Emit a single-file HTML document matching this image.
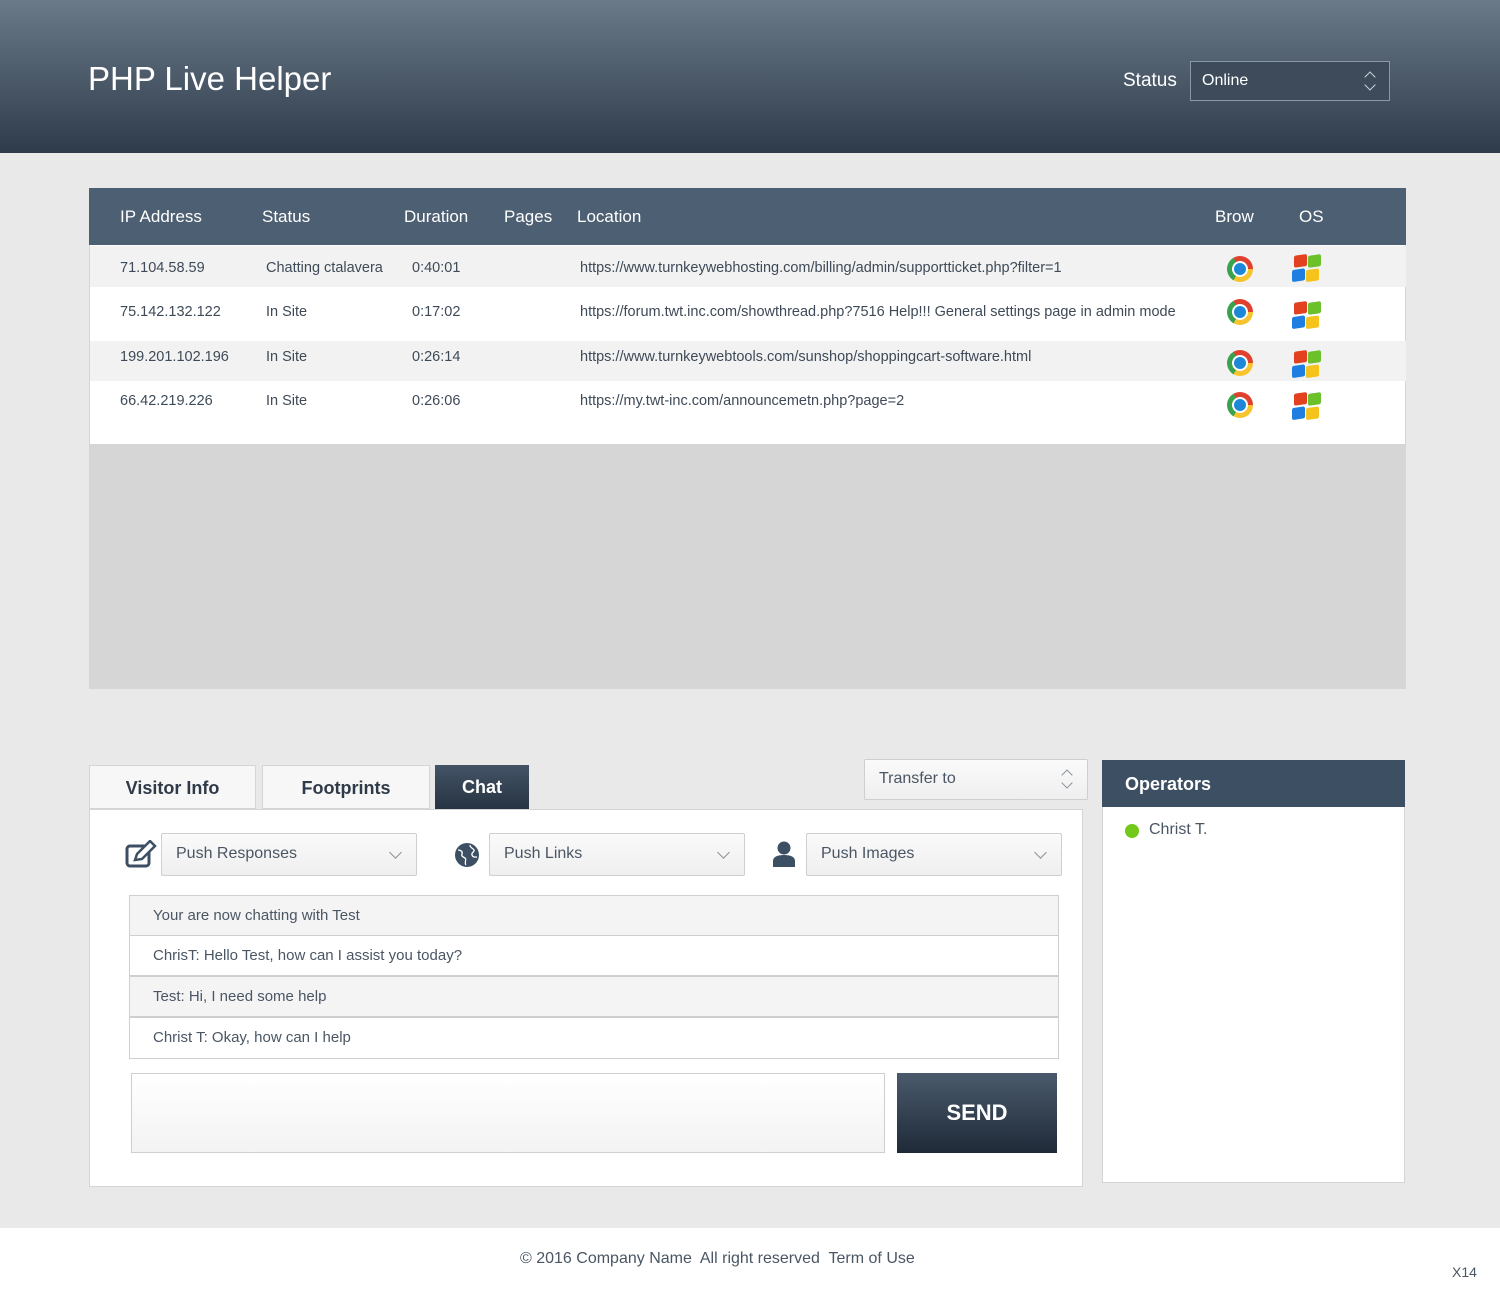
<!DOCTYPE html>
<html><head><meta charset="utf-8"><style>
*{box-sizing:border-box;margin:0;padding:0}
body{width:1500px;height:1293px;position:relative;background:#e9e9e9;font-family:"Liberation Sans",sans-serif;color:#3e4a57;overflow:hidden}
.a{position:absolute}
.hdr{left:0;top:0;width:1500px;height:153px;background:linear-gradient(#6a7a89,#2e3b4b)}
.th{color:#fff;font-size:17px;top:207px}
.td{font-size:14.5px;color:#3e4a57}
.row{left:90px;width:1316px}
.sel{background:linear-gradient(#fafafa,#efefef);border:1px solid #cfcfcf;border-radius:2px;font-size:16px;color:#4a5664;padding:11px 14px}
.chev{position:absolute;right:16px;top:14px;width:9px;height:9px;border-right:1.5px solid #8a929a;border-bottom:1.5px solid #8a929a;transform:rotate(45deg)}
.ud{position:absolute;width:8px;height:8px;border-right:1.5px solid currentColor;border-bottom:1.5px solid currentColor}
.msg{left:129px;width:930px;height:41px;border:1px solid #cfcfcf;font-size:15px;padding:11px 23px;color:#4a5664}
.chrome{width:26px;height:26px;border-radius:50%;background:conic-gradient(from -30deg,#e0412f 0 120deg,#f7c42e 120deg 240deg,#3aa14d 240deg 360deg)}
.chrome:after{content:"";position:absolute;left:7px;top:7px;width:12px;height:12px;border-radius:50%;background:#1e88d8;box-shadow:0 0 0 2px #fff}
.win{width:30px;height:28px;transform:skewY(-8deg)}
.win i{position:absolute;width:13px;height:12px;border-radius:2px}
.tab{font-size:18px;text-align:center;padding-top:12px;color:#2f3b48;font-weight:bold;top:765px;height:44px}
</style></head><body>
<div class="a hdr"></div>
<div class="a" style="left:88px;top:60px;font-size:33px;color:#fff">PHP Live Helper</div>
<div class="a" style="left:1123px;top:70px;font-size:19px;color:#fff">Status</div>
<div class="a" style="left:1190px;top:61px;width:200px;height:40px;border:1px solid #8a98a6;background:#3d4b5b;color:#fff;font-size:16px;padding:10px 11px">Online<i class="ud" style="right:15px;top:11px;color:#cfd6dc;transform:rotate(-135deg)"></i><i class="ud" style="right:15px;top:19px;color:#cfd6dc;transform:rotate(45deg)"></i></div>

<div class="a" style="left:89px;top:188px;width:1317px;height:257px;background:#fff;border:1px solid #d5d5d5"></div>
<div class="a" style="left:89px;top:188px;width:1317px;height:57px;background:#4d5f72"></div>
<div class="a th" style="left:120px">IP Address</div>
<div class="a th" style="left:262px">Status</div>
<div class="a th" style="left:404px">Duration</div>
<div class="a th" style="left:504px">Pages</div>
<div class="a th" style="left:577px">Location</div>
<div class="a th" style="left:1215px">Brow</div>
<div class="a th" style="left:1299px">OS</div>
<div class="a row" style="top:246px;height:41px;background:#f2f2f2"></div>
<div class="a row" style="top:341px;height:40px;background:#f2f2f2"></div>

<div class="a td" style="left:120px;top:260px">71.104.58.59</div><div class="a td" style="left:266px;top:260px">Chatting ctalavera</div><div class="a td" style="left:412px;top:260px">0:40:01</div><div class="a td" style="left:580px;top:260px">https://www.turnkeywebhosting.com/billing/admin/supportticket.php?filter=1</div>
<div class="a td" style="left:120px;top:304px">75.142.132.122</div><div class="a td" style="left:266px;top:304px">In Site</div><div class="a td" style="left:412px;top:304px">0:17:02</div><div class="a td" style="left:580px;top:304px">https://forum.twt.inc.com/showthread.php?7516 Help!!! General settings page in admin mode</div>
<div class="a td" style="left:120px;top:349px">199.201.102.196</div><div class="a td" style="left:266px;top:349px">In Site</div><div class="a td" style="left:412px;top:349px">0:26:14</div><div class="a td" style="left:580px;top:349px">https://www.turnkeywebtools.com/sunshop/shoppingcart-software.html</div>
<div class="a td" style="left:120px;top:393px">66.42.219.226</div><div class="a td" style="left:266px;top:393px">In Site</div><div class="a td" style="left:412px;top:393px">0:26:06</div><div class="a td" style="left:580px;top:393px">https://my.twt-inc.com/announcemetn.php?page=2</div>

<div class="a chrome" style="left:1227px;top:256px"></div>
<div class="a chrome" style="left:1227px;top:299px"></div>
<div class="a chrome" style="left:1227px;top:350px"></div>
<div class="a chrome" style="left:1227px;top:392px"></div>
<div class="a win" style="left:1292px;top:254px"><i style="left:2px;top:0;background:#e2401f"></i><i style="left:16px;top:2px;background:#6cc02a"></i><i style="left:0;top:14px;background:#1f7fe0"></i><i style="left:14px;top:16px;background:#f5c31c"></i></div>
<div class="a win" style="left:1292px;top:301px"><i style="left:2px;top:0;background:#e2401f"></i><i style="left:16px;top:2px;background:#6cc02a"></i><i style="left:0;top:14px;background:#1f7fe0"></i><i style="left:14px;top:16px;background:#f5c31c"></i></div>
<div class="a win" style="left:1292px;top:350px"><i style="left:2px;top:0;background:#e2401f"></i><i style="left:16px;top:2px;background:#6cc02a"></i><i style="left:0;top:14px;background:#1f7fe0"></i><i style="left:14px;top:16px;background:#f5c31c"></i></div>
<div class="a win" style="left:1292px;top:392px"><i style="left:2px;top:0;background:#e2401f"></i><i style="left:16px;top:2px;background:#6cc02a"></i><i style="left:0;top:14px;background:#1f7fe0"></i><i style="left:14px;top:16px;background:#f5c31c"></i></div>

<div class="a" style="left:89px;top:445px;width:1317px;height:244px;background:#d6d6d6"></div>

<div class="a tab" style="left:89px;width:167px;background:#f7f7f7;border:1px solid #d5d5d5">Visitor Info</div>
<div class="a tab" style="left:262px;width:168px;background:#f7f7f7;border:1px solid #d5d5d5">Footprints</div>
<div class="a tab" style="left:435px;width:94px;background:linear-gradient(#445466,#263342);color:#fff">Chat</div>
<div class="a sel" style="left:864px;top:759px;width:224px;height:41px;padding:10px 14px">Transfer to<i class="ud" style="right:16px;top:11px;color:#8a929a;transform:rotate(-135deg)"></i><i class="ud" style="right:16px;top:19px;color:#8a929a;transform:rotate(45deg)"></i></div>

<div class="a" style="left:89px;top:809px;width:994px;height:378px;background:#fff;border:1px solid #d5d5d5"></div>
<svg class="a" style="left:125px;top:840px" width="32" height="28" viewBox="0 0 32 28"><rect x="2" y="6" width="22" height="20" rx="3" fill="none" stroke="#3d4f63" stroke-width="3"/><path d="M10 20l2-6L25 1l5 5-13 13z" fill="#fff" stroke="#3d4f63" stroke-width="2.5"/></svg>
<div class="a sel" style="left:161px;top:833px;width:256px;height:43px">Push Responses<i class="chev"></i></div>
<svg class="a" style="left:454px;top:842px" width="26" height="26" viewBox="0 0 26 26"><circle cx="13" cy="13" r="12" fill="#3d4f63"/><path d="M4 8c3 0 5 2 4 4s1 3 3 4-1 5 1 7M16 3c0 3 3 3 4 5s-3 2-2 5 4 2 5 2" stroke="#fff" stroke-width="1.3" fill="none"/></svg>
<div class="a sel" style="left:489px;top:833px;width:256px;height:43px">Push Links<i class="chev"></i></div>
<svg class="a" style="left:772px;top:840px" width="24" height="28" viewBox="0 0 24 28"><circle cx="12" cy="8" r="6.5" fill="#3d4f63"/><path d="M1 27v-6c0-4 4-6 11-6s11 2 11 6v6z" fill="#3d4f63"/></svg>
<div class="a sel" style="left:806px;top:833px;width:256px;height:43px">Push Images<i class="chev"></i></div>

<div class="a msg" style="top:895px;background:#f4f4f4">Your are now chatting with Test</div>
<div class="a msg" style="top:935px;background:#fff">ChrisT: Hello Test, how can I assist you today?</div>
<div class="a msg" style="top:976px;background:#f4f4f4">Test: Hi, I need some help</div>
<div class="a msg" style="top:1017px;background:#fff;height:42px">Christ T: Okay, how can I help</div>
<div class="a" style="left:131px;top:1073px;width:754px;height:80px;border:1px solid #cfcfcf;background:linear-gradient(#fff,#f3f3f3)"></div>
<div class="a" style="left:897px;top:1073px;width:160px;height:80px;background:linear-gradient(#4a5a6c,#1f2a38);color:#fff;font-size:22px;text-align:center;padding-top:27px;font-weight:bold">SEND</div>

<div class="a" style="left:1102px;top:760px;width:303px;height:423px;background:#fff;border:1px solid #d5d5d5"></div>
<div class="a" style="left:1102px;top:760px;width:303px;height:47px;background:#3d4f63;color:#fff;font-size:18px;padding:14px 23px;font-weight:bold">Operators</div>
<div class="a" style="left:1125px;top:824px;width:14px;height:14px;border-radius:50%;background:#72c91a"></div>
<div class="a" style="left:1149px;top:821px;font-size:16px;color:#4a5664">Christ T.</div>

<div class="a" style="left:0;top:1228px;width:1500px;height:65px;background:#fff"></div>
<div class="a" style="left:520px;top:1250px;font-size:16px;color:#4a5664">© 2016 Company Name&nbsp; All right reserved&nbsp; Term of Use</div>
<div class="a" style="left:1452px;top:1264px;font-size:14px;color:#4a5664">X14</div>
</body></html>
